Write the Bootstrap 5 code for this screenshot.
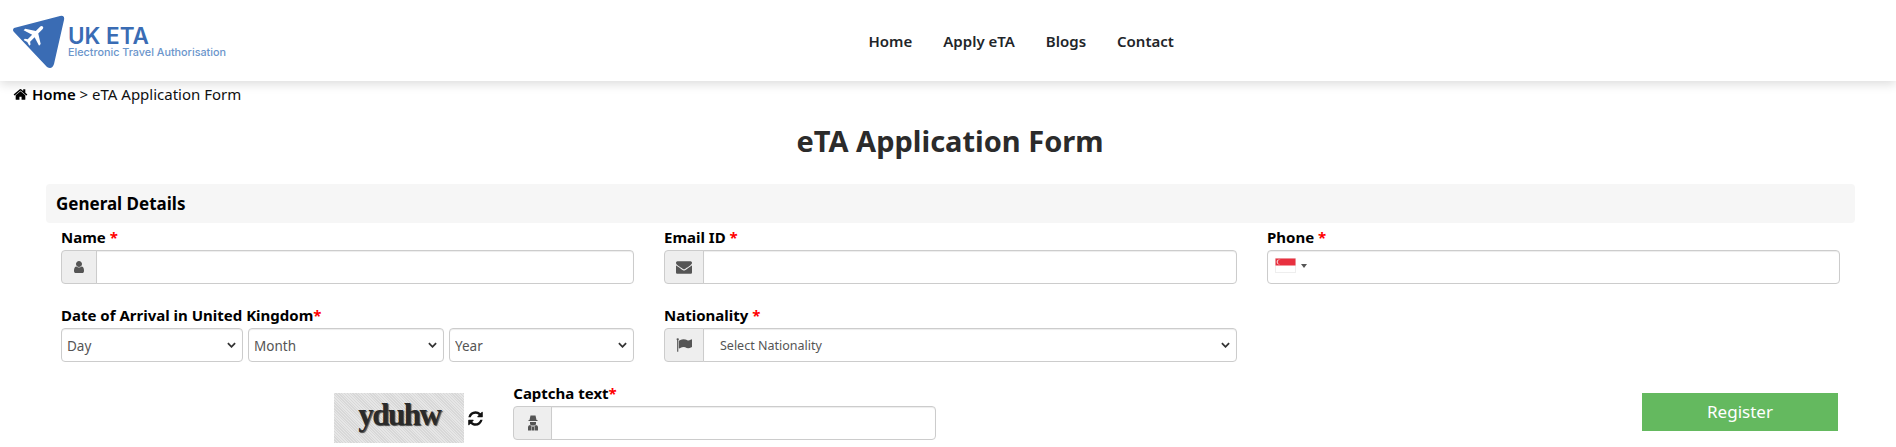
<!DOCTYPE html>
<html lang="en">
<head>
  <meta charset="UTF-8" />
  <title>eTA Application Form</title>
  <link href="https://cdn.jsdelivr.net/npm/bootstrap@5.3.3/dist/css/bootstrap.min.css" rel="stylesheet" />
  <style>
    body {
      background: #fff;
      color: #000;
      font-family: "Noto Sans", "Open Sans", sans-serif;
      font-size: 14px;
      overflow: hidden;
    }
    .site-head {
      height: 81px;
      background: #fff;
      box-shadow: 0 3px 10px rgba(0, 0, 0, 0.14);
    }
    .brand-box {
      width: 853px;
      padding-left: 13px;
      padding-top: 3px;
    }
    .brand-mark { width: 54px; height: 54px; margin-right: 1px; }
    .brand-name {
      font-family: Inter, sans-serif;
      font-size: 22.5px;
      font-weight: 600;
      line-height: 21px;
      color: #3a6cb4;
    }
    .brand-sub {
      font-family: Inter, sans-serif;
      font-size: 10.8px;
      font-weight: 500;
      line-height: 14px;
      color: #6b95cb;
      white-space: nowrap;
    }
    .site-link {
      padding: 2px 15.5px 0;
      color: #212529;
      font-size: 15px;
      font-weight: 600;
      text-decoration: none;
    }
    .crumb-line {
      height: 22px;
      margin-top: 2px;
      padding-left: 13px;
      font-size: 15px;
      line-height: 22px;
      color: #111;
    }
    .crumb-line a { color: #000; font-weight: 600; text-decoration: none; }
    .crumb-line svg { width: 15px; height: 15px; vertical-align: -2px; }
    .page-title {
      margin: 14px 0 0 4px;
      height: 65px;
      font-size: 29px;
      line-height: 44px;
      font-weight: 700;
      color: #2b2b2b;
      text-align: center;
    }
    .form-wrap { margin: 0 41px 0 46px; }
    .section-bar {
      height: 39px;
      padding-left: 10px;
      background: #f6f6f6;
      border-radius: 4px;
      font-size: 17px;
      font-weight: 700;
      line-height: 39px;
      color: #000;
    }
    .form-wrap .row { --bs-gutter-x: 30px; margin-left: 0; margin-right: 0; }
    .field-box { margin-bottom: 17px; }
    .field-label {
      display: block;
      height: 22px;
      margin-bottom: 5px;
      font-size: 15px;
      font-weight: 700;
      line-height: 29px;
    }
    .req { color: #f00; }
    .form-control, .form-select {
      height: 34px;
      min-height: 34px;
      border: 1px solid #ccc;
      border-radius: 4px;
      font-size: 13.5px;
      color: #555;
      box-shadow: inset 0 1px 1px rgba(0, 0, 0, 0.075);
    }
    .form-select {
      padding: 2px 20px 0 5px;
      background-image: url("data:image/svg+xml,%3csvg xmlns='http://www.w3.org/2000/svg' viewBox='0 0 10 6'%3e%3cpath fill='none' stroke='%23333' stroke-width='2' d='M1 1l4 4 4-4'/%3e%3c/svg%3e");
      background-position: right 6px center;
      background-size: 9px 6px;
    }
    .day-picks { gap: 5px; }
    .pick-day { flex: 0 0 182px; width: 182px; }
    .pick-month { flex: 0 0 196px; width: 196px; }
    .pick-year { flex: 1 1 0; width: auto; }
    .input-group-text {
      width: 40px;
      padding: 0;
      justify-content: center;
      background: #eee;
      border: 1px solid #ccc;
      border-radius: 4px;
      color: #555;
    }
    .name-addon { width: 36px; }
    .captcha-addon { width: 39px; }
    .input-group-text svg { width: 16px; height: 16px; fill: #555; }
    .name-addon svg { width: 14px; height: 14px; }
    .nation-select { padding-left: 16px; font-size: 12.5px; }
    .phone-box {
      height: 34px;
      border: 1px solid #ccc;
      border-radius: 4px;
      padding: 7px 0 0 7px;
      box-shadow: inset 0 1px 1px rgba(0, 0, 0, 0.075);
    }
    .flag-sg { width: 21px; height: 15px; display: block; }
    .flag-caret {
      width: 0;
      height: 0;
      margin: 6px 0 0 5px;
      border: 3px solid transparent;
      border-top: 4px solid #555;
      border-bottom: 0;
    }
    .captcha-box { margin-top: 14px; margin-right: -1px; gap: 3px; }
    .captcha-pic {
      width: 130px;
      height: 50px;
      background: repeating-linear-gradient(45deg, #d8d8d8 0 1px, #e6e6e6 1px 2px);
      font-family: "Liberation Serif", serif;
      font-size: 31px;
      font-weight: 700;
      line-height: 44px;
      letter-spacing: -1.5px;
      color: #2a2a2a;
      text-align: center;
      text-shadow: 1px 1px 1px #444;
      overflow: hidden;
    }
    .captcha-spin { width: 17px; height: 17px; fill: #111; }
    .register-btn {
      width: 196px;
      height: 38px;
      margin: 14px 2px 0 auto;
      display: block;
      padding: 0;
      border: 0;
      border-radius: 0;
      background: #64b95f;
      color: #fff;
      font-size: 17px;
    }
  </style>
</head>
<body>
  <header class="site-head d-flex align-items-center">
    <div class="brand-box d-flex align-items-center flex-shrink-0">
      <svg class="brand-mark" viewBox="0 0 54 54">
        <path d="M1 13 47 1q5-1 4 4L41 49q-2 6-7 3L1 17q-2-2 0-4z" fill="#3a6cb4"/>
        <g transform="translate(9 6) rotate(45 13 13) scale(1.15)">
          <path d="M21 16v-2l-8-5V3.500c0-.83-.67-1.500-1.500-1.500S10 2.670 10 3.500V9l-8 5v2l8-2.500V19l-2 1.500V22l3.500-1 3.500 1v-1.500L13 19v-5.500z" fill="#fff"/>
        </g>
      </svg>
      <div>
        <div class="brand-name">UK ETA</div>
        <div class="brand-sub">Electronic Travel Authorisation</div>
      </div>
    </div>
    <nav class="d-flex">
      <a class="site-link" href="#">Home</a>
      <a class="site-link" href="#">Apply eTA</a>
      <a class="site-link" href="#">Blogs</a>
      <a class="site-link" href="#">Contact</a>
    </nav>
  </header>

  <div class="crumb-line">
    <svg viewBox="0 0 1792 1792"><path d="M1472 992v480q0 26-19 45t-45 19h-384v-384h-256v384h-384q-26 0-45-19t-19-45v-480q0-1 .5-3t.5-3l575-474 575 474q1 2 1 6zm223-69l-62 74q-8 9-21 11h-3q-13 0-21-7l-692-577-692 577q-12 8-24 7-13-2-21-11l-62-74q-8-10-7-23.500t11-21.500l719-599q32-26 76-26t76 26l244 204v-195q0-14 9-23t23-9h192q14 0 23 9t9 23v408l219 182q10 8 11 21.500t-7 23.500z"/></svg>
    <a href="#">Home</a> &gt; eTA Application Form
  </div>

  <h1 class="page-title">eTA Application Form</h1>

  <form class="form-wrap">
    <div class="section-bar">General Details</div>
    <div class="row">
      <div class="col-4 field-box">
        <label class="field-label">Name <span class="req">*</span></label>
        <div class="input-group">
          <span class="input-group-text name-addon"><svg viewBox="0 0 1792 1792"><path d="M1536 1399q0 109-62.500 187t-150.500 78h-854q-88 0-150.500-78t-62.500-187q0-85 8.500-160.500t31.500-152 58.500-131 94-89 134.500-34.500q131 128 313 128t313-128q76 0 134.500 34.500t94 89 58.500 131 31.500 152 8.500 160.500zm-256-887q0 159-112.500 271.500t-271.500 112.500-271.500-112.500-112.500-271.500 112.500-271.500 271.500-112.500 271.500 112.500 112.500 271.500z"/></svg></span>
          <input type="text" class="form-control" />
        </div>
      </div>
      <div class="col-4 field-box">
        <label class="field-label">Email ID <span class="req">*</span></label>
        <div class="input-group">
          <span class="input-group-text"><svg viewBox="0 0 1792 1792"><path d="M1792 710v794q0 66-47 113t-113 47h-1472q-66 0-113-47t-47-113v-794q44 49 101 87 362 246 497 345 57 42 92.500 65.500t94.500 48 110 24.500h2q51 0 110-24.500t94.500-48 92.500-65.500q170-123 498-345 57-39 100-87zm0-294q0 79-49 151t-122 123q-376 261-468 325-10 7-42.500 30.500t-54 38-52 32.500-57.500 27-50 9h-2q-23 0-50-9t-57.500-27-52-32.500-54-38-42.500-30.500q-91-64-262-182.500t-205-142.500q-62-42-117-115.500t-55-136.500q0-78 41.500-130t118.500-52h1472q65 0 112.500 47t47.500 113z"/></svg></span>
          <input type="email" class="form-control" />
        </div>
      </div>
      <div class="col-4 field-box">
        <label class="field-label">Phone <span class="req">*</span></label>
        <div class="phone-box d-flex">
          <svg class="flag-sg" viewBox="0 0 21 15">
            <rect x="0.500" y="0.500" width="20" height="14" fill="#fff" stroke="#eee"/>
            <rect x="0.500" y="0.500" width="20" height="7" fill="#e8303f"/>
            <circle cx="4" cy="4" r="2.400" fill="#f7c0c4"/>
            <circle cx="5" cy="4" r="2.200" fill="#e8303f"/>
          </svg>
          <span class="flag-caret"></span>
        </div>
      </div>
    </div>
    <div class="row">
      <div class="col-4 field-box">
        <label class="field-label">Date of Arrival in United Kingdom<span class="req">*</span></label>
        <div class="d-flex day-picks">
          <select class="form-select pick-day"><option>Day</option></select>
          <select class="form-select pick-month"><option>Month</option></select>
          <select class="form-select pick-year"><option>Year</option></select>
        </div>
      </div>
      <div class="col-4 field-box">
        <label class="field-label">Nationality <span class="req">*</span></label>
        <div class="input-group">
          <span class="input-group-text"><svg viewBox="0 0 1792 1792"><path d="M320 256q0 72-64 110v1266q0 13-9.500 22.500t-22.500 9.500h-64q-13 0-22.500-9.500t-9.500-22.500v-1266q-64-38-64-110 0-53 37.500-90.500t90.500-37.500 90.500 37.500 37.500 90.500zm1472 64v763q0 25-12.500 38.500t-39.500 27.500q-215 116-369 116-61 0-123.500-22t-108.500-48-115.500-48-142.500-22q-192 0-464 146-17 9-33 9-26 0-45-19t-19-45v-742q0-32 31-55 21-14 79-43 236-120 421-120 107 0 200 29t219 88q38 19 88 19 54 0 117.500-21t110-47 88-47 54.500-21q26 0 45 19t19 45z"/></svg></span>
          <select class="form-select nation-select"><option>Select Nationality</option></select>
        </div>
      </div>
    </div>
    <div class="row">
      <div class="col-3">
        <div class="captcha-box d-flex justify-content-end align-items-center">
          <div class="captcha-pic">yduhw</div>
          <svg class="captcha-spin" viewBox="0 0 1792 1792"><path d="M1639 1056q0 5-1 7-64 268-268 434.500t-478 166.500q-146 0-282.500-55t-243.500-157l-129 129q-19 19-45 19t-45-19-19-45v-448q0-26 19-45t45-19h448q26 0 45 19t19 45-19 45l-137 137q71 66 161 102t187 36q134 0 250-65t186-179q11-17 53-117 8-23 30-23h192q13 0 22.500 9.500t9.500 22.500zm25-800v448q0 26-19 45t-45 19h-448q-26 0-45-19t-19-45 19-45l138-138q-148-137-349-137-134 0-250 65t-186 179q-11 17-53 117-8 23-30 23h-199q-13 0-22.500-9.500t-9.500-22.500v-7q65-268 270-434.500t480-166.500q146 0 284 55.500t245 156.500l130-129q19-19 45-19t45 19 19 45z"/></svg>
        </div>
      </div>
      <div class="col-3">
        <label class="field-label">Captcha text<span class="req">*</span></label>
        <div class="input-group">
          <span class="input-group-text captcha-addon"><svg viewBox="0 0 16 16"><path d="M5.500 0.500h5l1 4.500h1v1h-9V5h1zM5 7h6v1.500q0 2-3 2t-3-2zM3 15.500V12q0-1.500 2-2l1.500 1v4.500zm10 0V12q0-1.500-2-2l-1.500 1v4.500zM7 11.500h2v4H7z"/></svg></span>
          <input type="text" class="form-control" />
        </div>
      </div>
      <div class="col-3"></div>
      <div class="col-3">
        <button type="button" class="btn register-btn">Register</button>
      </div>
    </div>
  </form>
  <script src="https://cdn.jsdelivr.net/npm/bootstrap@5.3.3/dist/js/bootstrap.bundle.min.js"></script>
</body>
</html>
